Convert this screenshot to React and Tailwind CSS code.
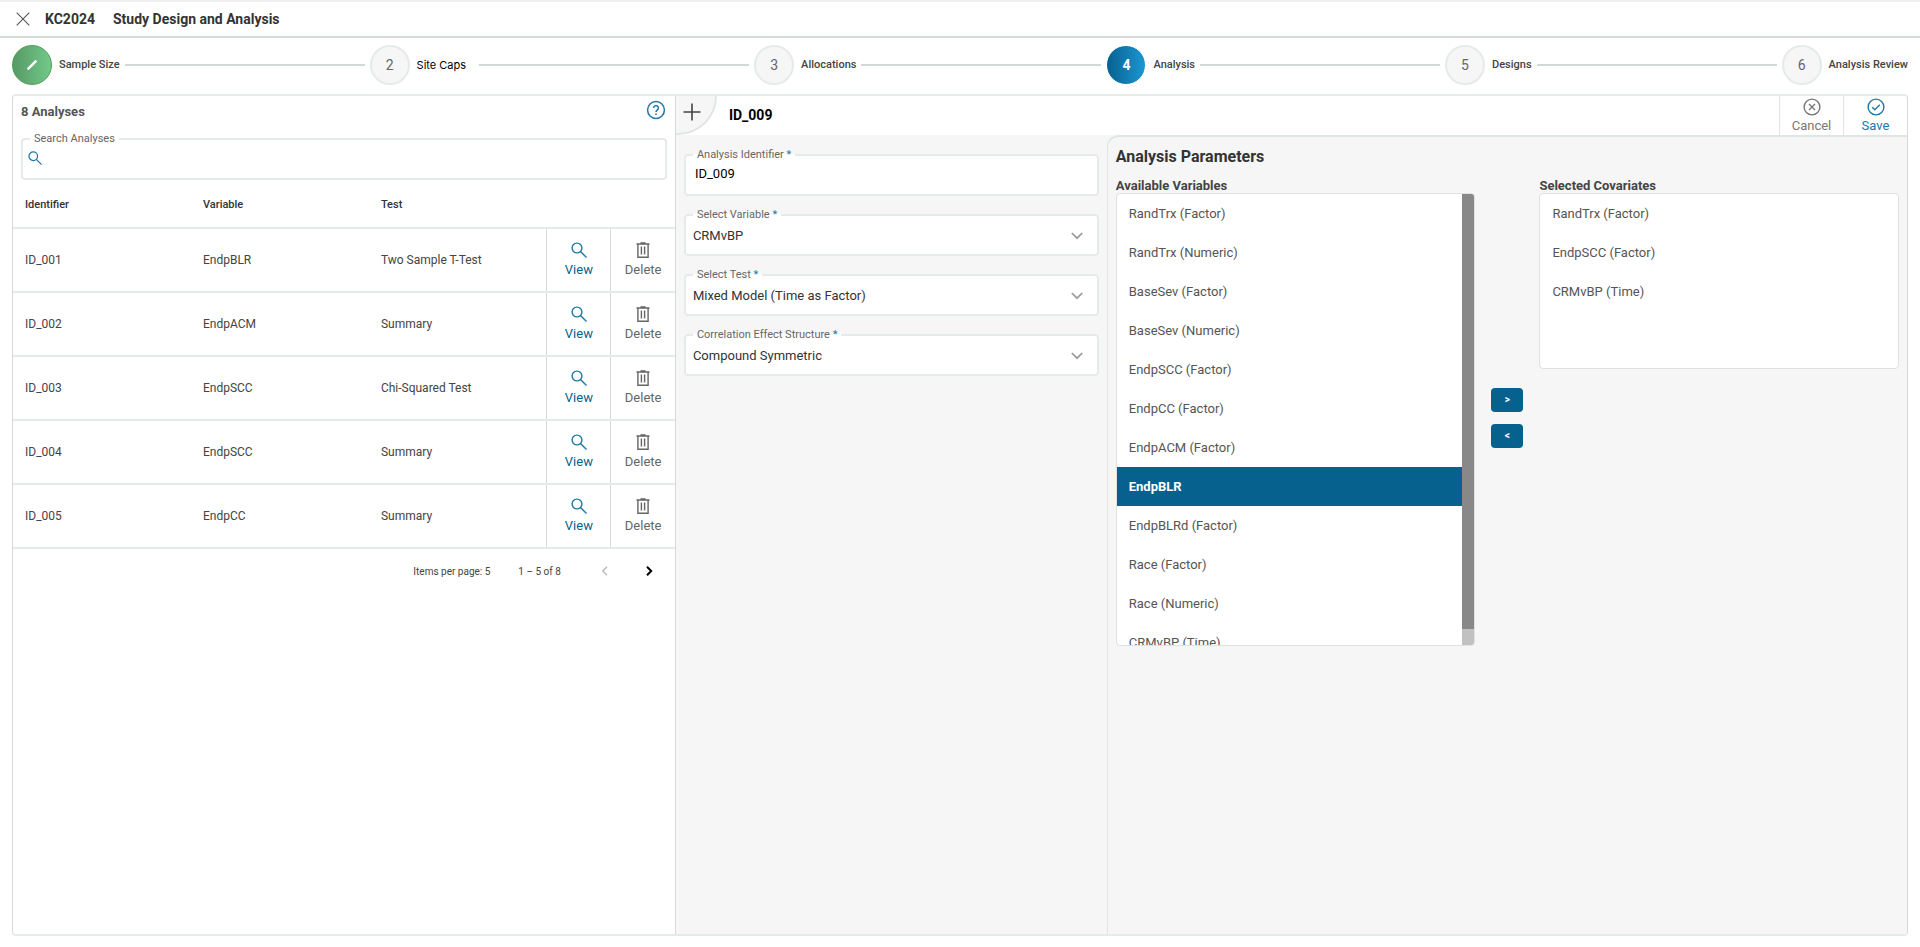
import React, { useState } from "react";

const steps = [
  { n: 1, label: "Sample Size", done: true },
  { n: 2, label: "Site Caps" },
  { n: 3, label: "Allocations" },
  { n: 4, label: "Analysis", active: true },
  { n: 5, label: "Designs" },
  { n: 6, label: "Analysis Review" },
];

const analyses = [
  { id: "ID_001", variable: "EndpBLR", test: "Two Sample T-Test" },
  { id: "ID_002", variable: "EndpACM", test: "Summary" },
  { id: "ID_003", variable: "EndpSCC", test: "Chi-Squared Test" },
  { id: "ID_004", variable: "EndpSCC", test: "Summary" },
  { id: "ID_005", variable: "EndpCC", test: "Summary" },
];

const available = [
  "RandTrx (Factor)",
  "RandTrx (Numeric)",
  "BaseSev (Factor)",
  "BaseSev (Numeric)",
  "EndpSCC (Factor)",
  "EndpCC (Factor)",
  "EndpACM (Factor)",
  "EndpBLR",
  "EndpBLRd (Factor)",
  "Race (Factor)",
  "Race (Numeric)",
  "CRMvBP (Time)",
];

const covariates = ["RandTrx (Factor)", "EndpSCC (Factor)", "CRMvBP (Time)"];

function SearchIcon({ className }) {
  return (
    <svg viewBox="0 0 16 16" className={className} fill="none" stroke="currentColor" strokeWidth="1.4">
      <circle cx="6" cy="6" r="4.9" />
      <path d="M9.5 9.5 15.5 15.5" />
    </svg>
  );
}

function TrashIcon() {
  return (
    <svg viewBox="0 0 14 16" className="h-4 w-[14px]" fill="none" stroke="currentColor" strokeWidth="1.4">
      <path d="M.5 2h13M4.5 1h5M1.9 2v13.2h10.2V2M5.4 4.5v8M8.6 4.5v8" />
    </svg>
  );
}

function ChevronDown() {
  return (
    <svg viewBox="0 0 12 8" className="pointer-events-none h-2 w-3 shrink-0 text-[#9a9a9a]" fill="none" stroke="currentColor" strokeWidth="1.7">
      <path d="m.8 1 5.2 5.2L11.2 1" />
    </svg>
  );
}

function Step({ step, last }) {
  let circle = "border-2 border-[#e6eaea] bg-[#f6f6f6] text-[#666]";
  if (step.done) circle = "border border-[#4f9e50] bg-linear-to-r from-[#579a66] to-[#72c98a] text-white";
  if (step.active) circle = "border border-white bg-linear-to-r from-[#07618f] to-[#1c97d3] text-white font-bold";

  return (
    <>
      <button className="flex shrink-0 items-center gap-[7px]">
        <span className={"flex size-10 items-center justify-center rounded-full text-sm " + circle}>
          {step.done ? (
            <svg viewBox="0 0 12 12" className="size-3" stroke="currentColor" strokeWidth="2.6" strokeLinecap="round">
              <path d="M2.4 9.6 9.6 2.4" />
            </svg>
          ) : (
            step.n
          )}
        </span>
        {step.n === 2 ? (
          <span className="pr-2 font-[Inter] text-[11px] text-black">{step.label}</span>
        ) : (
          <span className="text-[11px] font-medium text-[#444]">{step.label}</span>
        )}
      </button>
      {!last && (
        <div className={"mx-[5px] h-[2px] bg-[#d3d9d9] " + (step.n === 2 ? "grow-9" : "grow-8")} />
      )}
    </>
  );
}

function Field({ id, label, required, children }) {
  return (
    <fieldset className="h-[47px] min-w-0 rounded-[4px] border-2 border-[#e6ebea] bg-white">
      <legend className="ml-[7px] px-1 text-[11px] leading-3 text-[#666]">
        <label htmlFor={id}>
          {label} {required && <span className="text-[#2277a5]">*</span>}
        </label>
      </legend>
      {children}
    </fieldset>
  );
}

function SelectField({ id, label, value }) {
  return (
    <Field id={id} label={label} required>
      <div className="flex items-center pr-[14px]">
        <select id={id} className="h-[29px] grow appearance-none bg-transparent pl-[7px] text-[13px] text-[#333] outline-none">
          <option>{value}</option>
        </select>
        <ChevronDown />
      </div>
    </Field>
  );
}

function VariableList({ labelId, items, selected, onSelect }) {
  return (
    <ul role="listbox" aria-labelledby={labelId} className="min-w-0 grow overflow-hidden">
      {items.map((item) => (
        <li
          key={item}
          role="option"
          aria-selected={item === selected}
          onClick={() => onSelect && onSelect(item)}
          className={
            "h-[39px] cursor-default px-3 text-[13px] leading-[39px] " +
            (item === selected ? "bg-[#07618f] font-bold text-white" : "text-[#555]")
          }
        >
          {item}
        </li>
      ))}
    </ul>
  );
}

function AnalysesPanel() {
  return (
    <section className="w-[35%] shrink-0 border-r border-[#d6dada]">
      <div className="flex h-[41px] items-start justify-between pl-2 pr-[9px]">
        <h2 className="pt-2 text-[13px] leading-4 font-bold text-[#555]">8 Analyses</h2>
        <button aria-label="Help" className="pt-1 text-[#2277a5]">
          <svg viewBox="0 0 20 20" className="size-5" fill="none" stroke="currentColor" strokeWidth="1.5">
            <circle cx="10" cy="10" r="8.4" />
            <path d="M7.6 8a2.4 2.4 0 1 1 3.7 2c-.9.6-1.3 1-1.3 2" />
            <path d="M10 13.4v1.5" />
          </svg>
        </button>
      </div>
      <div className="-mt-1 px-2">
        <Field id="search" label="Search Analyses">
          <div className="flex items-start px-[5px]">
            <SearchIcon className="mt-[6px] size-[14px] shrink-0 text-[#2277a5]" />
            <input id="search" className="h-6 grow px-2 text-[13px] outline-none" />
          </div>
        </Field>
      </div>
      <table className="w-full table-fixed text-left text-xs text-[#444]">
        <thead>
          <tr className="h-12 border-b-2 border-[#e6ebea] text-[11px] text-[#333]">
            <th className="pt-1 pl-3 font-medium">Identifier</th>
            <th className="pt-1 pl-3 font-medium">Variable</th>
            <th className="pt-1 pl-3 font-medium">Test</th>
            <th className="w-16"></th>
            <th className="w-16"></th>
          </tr>
        </thead>
        <tbody>
          {analyses.map((a) => (
            <tr key={a.id} className="h-16 border-b-2 border-[#e6ebea]">
              <td className="pl-3">{a.id}</td>
              <td className="pl-3">{a.variable}</td>
              <td className="pl-3">{a.test}</td>
              <td className="border-l border-[#d6dada]">
                <button className="flex w-full flex-col items-center gap-1 text-[13px] leading-4 text-[#07618f]">
                  <SearchIcon className="size-4 text-[#2277a5]" />
                  View
                </button>
              </td>
              <td className="border-l border-[#d6dada]">
                <button className="flex w-full flex-col items-center gap-1 text-[13px] leading-4 text-[#666]">
                  <TrashIcon />
                  Delete
                </button>
              </td>
            </tr>
          ))}
        </tbody>
      </table>
      <div className="flex h-11 items-center justify-end pr-[22px] text-[10px] text-[#444]">
        <span>Items per page: 5</span>
        <span className="ml-7">1 – 5 of 8</span>
        <button aria-label="Previous page" className="ml-10 text-[#bbb]">
          <svg viewBox="0 0 8 12" className="h-3 w-2" fill="none" stroke="currentColor" strokeWidth="1.5">
            <path d="M6 1.8 1.8 6 6 10.2" />
          </svg>
        </button>
        <button aria-label="Next page" className="ml-9 text-black">
          <svg viewBox="0 0 8 12" className="h-3 w-2" fill="none" stroke="currentColor" strokeWidth="2">
            <path d="M2 1.8 6.2 6 2 10.2" />
          </svg>
        </button>
      </div>
    </section>
  );
}

function AnalysisParameters() {
  const [selected, setSelected] = useState("EndpBLR");

  return (
    <section className="grow rounded-tl-xl border-t-2 border-l border-[#dfe4e4] px-2 pt-[10px]">
      <h2 className="text-base leading-5 font-bold text-[#333]">Analysis Parameters</h2>
      <div className="mt-[11px] grid grid-cols-[1fr_32px_1fr] gap-x-4">
        <h3 id="available" className="text-[13px] leading-[15px] font-bold text-[#444]">Available Variables</h3>
        <span />
        <h3 id="selected" className="text-[13px] leading-[15px] font-bold text-[#444]">Selected Covariates</h3>

        <div className="flex h-[453px] overflow-hidden rounded-[4px] border border-[#dde2e2] bg-white">
          <VariableList labelId="available" items={available} selected={selected} onSelect={setSelected} />
          <div className="flex w-3 shrink-0 flex-col bg-[#c1c1c1]">
            <div className="h-[435px] bg-[#888]" />
          </div>
        </div>
        <div className="flex flex-col gap-3 self-center pb-1">
          <button className="h-6 rounded-[4px] bg-[#07618f] text-[10px] font-bold text-white">&gt;</button>
          <button className="h-6 rounded-[4px] bg-[#07618f] text-[10px] font-bold text-white">&lt;</button>
        </div>
        <div className="flex h-44 rounded-[4px] border border-[#dde2e2] bg-white">
          <VariableList labelId="selected" items={covariates} />
        </div>
      </div>
    </section>
  );
}

export default function App() {
  return (
    <div className="flex min-h-screen flex-col bg-white font-[Roboto,sans-serif]">
      <header className="flex h-[38px] items-center border-t-2 border-b-2 border-t-[#f0f0f0] border-b-[#d5dada] pb-px pl-4 text-sm font-bold text-[#333]">
        <button aria-label="Close" className="text-[#555]">
          <svg viewBox="0 0 14 14" className="size-[14px]" stroke="currentColor" strokeWidth="1.1">
            <path d="M.7.7 13.3 13.3M13.3.7.7 13.3" />
          </svg>
        </button>
        <span className="ml-[15px]">KC2024</span>
        <h1 className="ml-[18px]">Study Design and Analysis</h1>
      </header>

      <nav className="flex h-14 items-center px-3 pb-[2px]">
        {steps.map((s, i) => (
          <Step key={s.n} step={s} last={i === steps.length - 1} />
        ))}
      </nav>

      <main className="mx-3 mb-[11px] flex grow rounded-[4px] border-x border-t-2 border-b-2 border-x-[#d6dada] border-y-[#e6ebea]">
        <AnalysesPanel />
        <div className="flex grow flex-col">
          <div className="flex h-[39px] shrink-0">
            <button aria-label="Add analysis" className="flex w-[41px] items-center rounded-br-full border-r-2 border-b-2 border-[#e1e5e5] bg-[#f6f6f6] pb-[5px] pl-[7px] text-[#444]">
              <svg viewBox="0 0 18 18" className="size-[18px]" stroke="currentColor" strokeWidth="1.6">
                <path d="M9 .5v17M.5 9h17" />
              </svg>
            </button>
            <h2 className="ml-3 grow self-center pb-px text-sm font-bold text-black">ID_009</h2>
            <button className="flex w-16 flex-col items-center gap-[2px] border-l border-[#dfe4e4] pt-[2px] text-[13px] leading-4 text-[#777]">
              <svg viewBox="0 0 18 18" className="size-[18px] shrink-0" fill="none" stroke="currentColor" strokeWidth="1.4">
                <circle cx="9" cy="9" r="7.9" />
                <path d="m6 6 6 6M12 6l-6 6" />
              </svg>
              Cancel
            </button>
            <button className="flex w-16 flex-col items-center gap-[2px] border-l border-[#dfe4e4] pt-[2px] text-[13px] leading-4 text-[#2277a5]">
              <svg viewBox="0 0 18 18" className="size-[18px] shrink-0" fill="none" stroke="currentColor" strokeWidth="1.4">
                <circle cx="9" cy="9" r="7.9" />
                <path d="m5.2 9.2 2.6 2.6 5-5" />
              </svg>
              Save
            </button>
          </div>
          <div className="flex grow bg-[#f6f6f6]">
            <form className="flex w-[35%] shrink-0 flex-col gap-[13px] px-2 pt-[14px]">
              <Field id="identifier" label="Analysis Identifier" required>
                <input id="identifier" defaultValue="ID_009" className="h-6 w-full bg-transparent px-[9px] text-[13px] text-black outline-none" />
              </Field>
              <SelectField id="variable" label="Select Variable" value="CRMvBP" />
              <SelectField id="test" label="Select Test" value="Mixed Model (Time as Factor)" />
              <SelectField id="structure" label="Correlation Effect Structure" value="Compound Symmetric" />
            </form>
            <AnalysisParameters />
          </div>
        </div>
      </main>
    </div>
  );
}
